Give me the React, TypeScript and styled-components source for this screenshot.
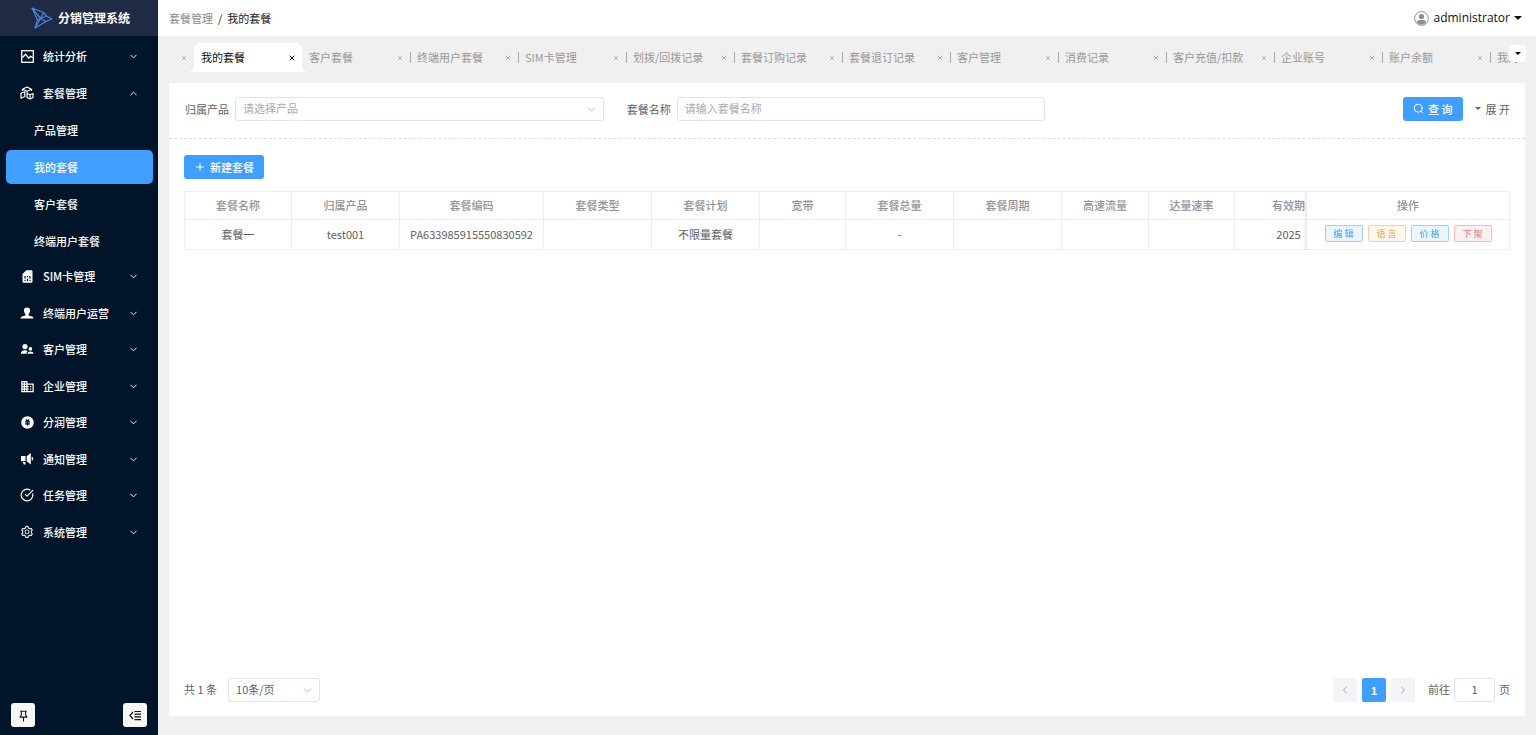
import React from "react";
import styled, { createGlobalStyle, css } from "styled-components";
import { CircleCheckBig, ChevronDown, ChevronUp, ChevronLeft, ChevronRight, Plus, X } from "lucide-react";
import { MdSimCard, MdBusiness } from "react-icons/md";
import { RiMoneyCnyCircleFill, RiPushpin2Line } from "react-icons/ri";
import { AiOutlineSetting } from "react-icons/ai";

const Global = createGlobalStyle`
  *, *::before, *::after { box-sizing: border-box; }
  body {
    margin: 0;
    font-family: "Noto Sans CJK SC", "Noto Sans", sans-serif;
    font-size: 11px;
    line-height: 16px;
    color: #606266;
    background: #f0f0f0;
  }
  button, input, select { font: inherit; color: inherit; margin: 0; }
  button { cursor: pointer; padding: 0; border: 0; background: none; }
  a { color: inherit; text-decoration: none; }
  ul { list-style: none; margin: 0; padding: 0; }
  svg { display: block; flex: none; }
`;

const Page = styled.div`
  display: flex;
  min-height: 100vh;
`;

const Sidebar = styled.aside`
  width: 158px;
  flex: none;
  display: flex;
  flex-direction: column;
  background: #001529;
  color: #fff;
`;

const Brand = styled.a`
  display: flex;
  align-items: center;
  height: 36px;
  padding-left: 31px;
  gap: 5px;
  background: #1f2a44;
  font-size: 12px;
  font-weight: 700;
  white-space: nowrap;
`;

const Menu = styled.ul`
  flex: 1;
  padding: 2px 5px 0 6px;
`;

const MenuGroup = styled.li`
  &:nth-child(even) {
    padding-top: 1px;
  }
`;

const MenuButton = styled.button`
  display: flex;
  align-items: center;
  width: 100%;
  height: 36px;
  padding: 0 14px 0 13px;
  gap: 8px;
  color: #fff;
  font-weight: 500;
  text-align: left;
`;

const MenuLabel = styled.span`
  flex: 1;
  white-space: nowrap;
`;

const SubMenu = styled.ul`
  display: flex;
  flex-direction: column;
  gap: 3px;
  padding-top: 2px;
`;

const SubLink = styled.a<{ $active?: boolean }>`
  display: flex;
  align-items: center;
  height: 34px;
  padding-left: 28px;
  border-radius: 5px;
  font-weight: 500;
  background: ${(p) => (p.$active ? "#409eff" : "transparent")};
`;

const SidebarFooter = styled.div`
  display: flex;
  justify-content: space-between;
  padding: 8px 11px;
`;

const SquareButton = styled.button`
  display: grid;
  place-items: center;
  width: 24px;
  height: 24px;
  border-radius: 3px;
  background: #f7f7f7;
  color: #111;
`;

const Main = styled.main`
  flex: 1;
  min-width: 0;
  display: flex;
  flex-direction: column;
`;

const TopBar = styled.header`
  display: flex;
  align-items: center;
  justify-content: space-between;
  height: 36px;
  padding: 0 14px 0 11px;
  background: #fff;
`;

const Crumbs = styled.nav`
  display: flex;
  gap: 5px;
  color: #222;
  a { color: #8c8c8c; }
`;

const UserButton = styled.button`
  display: flex;
  align-items: center;
  gap: 4px;
  font-family: "Open Sans", "Noto Sans", sans-serif;
  font-size: 12px;
  color: #111;
`;

const TabBar = styled.div`
  position: relative;
  padding-left: 11px;
`;

const TabStrip = styled.div`
  display: flex;
  height: 47px;
  padding-top: 7px;
  overflow: hidden;
`;

const Tab = styled.div<{ $active?: boolean; $divider?: boolean; $tail?: boolean }>`
  position: relative;
  display: flex;
  align-items: center;
  justify-content: ${(p) => (p.$tail ? "flex-end" : "space-between")};
  flex: none;
  width: ${(p) => (p.$tail ? 25 : 108)}px;
  height: 29px;
  padding: 0 6px 0 7px;
  color: #999;
  ${(p) =>
    p.$divider &&
    css`
      &::before {
        content: "";
        position: absolute;
        left: 0;
        top: 9px;
        width: 1px;
        height: 11px;
        background: #aaa;
      }
    `}
  ${(p) =>
    p.$active &&
    css`
      background: #fff;
      color: #111;
      border-radius: 6px 6px 0 0;
      &::before,
      &::after {
        content: "";
        position: absolute;
        bottom: 0;
        width: 6px;
        height: 6px;
      }
      &::before {
        left: -6px;
        background: radial-gradient(circle at 0 0, transparent 6px, #fff 6px);
      }
      &::after {
        right: -6px;
        background: radial-gradient(circle at 100% 0, transparent 6px, #fff 6px);
      }
    `}
`;

const TabText = styled.a`
  padding-bottom: 1px;
  white-space: nowrap;
`;

const TabClose = styled.button`
  display: grid;
  place-items: center;
  width: 9px;
  height: 9px;
  color: inherit;
`;

const TabMore = styled.button`
  position: absolute;
  right: 10px;
  top: 9px;
  display: grid;
  place-items: center;
  width: 17px;
  height: 17px;
  border-radius: 3px;
  background: #fff;
  color: #000;
`;

const Card = styled.section`
  flex: 1;
  display: flex;
  flex-direction: column;
  margin: 0 11px 19px;
  background: #fff;
`;

const Filters = styled.form`
  display: grid;
  grid-template-columns: repeat(3, 1fr);
  align-items: center;
  padding: 14px 15px 17px 16px;
  border-bottom: 1px dashed #dcdfe6;
`;

const Field = styled.div`
  display: flex;
  align-items: center;
  gap: 6px;
  padding-right: 23px;
`;

const FieldLabel = styled.label`
  white-space: nowrap;
`;

const controlBox = css`
  width: 100%;
  height: 24px;
  padding: 0 7px 2px;
  border: 1px solid #e0e3ea;
  border-radius: 3px;
  background: #fff;
  outline: 0;
`;

const SelectWrap = styled.div<{ $width?: number }>`
  display: grid;
  align-items: center;
  ${(p) => (p.$width ? `width: ${p.$width}px;` : "flex: 1;")}
  & > * { grid-area: 1 / 1; }
  & > svg { justify-self: end; margin-right: 6px; color: #a8abb2; pointer-events: none; }
`;

const Select = styled.select<{ $empty?: boolean }>`
  ${controlBox}
  appearance: none;
  color: ${(p) => (p.$empty ? "#a8abb2" : "#606266")};
`;

const TextInput = styled.input`
  ${controlBox}
  flex: 1;
  min-width: 0;
  &::placeholder { color: #a8abb2; opacity: 1; }
`;

const FilterActions = styled.div`
  display: flex;
  justify-content: flex-end;
  align-items: center;
  gap: 12px;
`;

const PrimaryButton = styled.button`
  display: flex;
  align-items: center;
  gap: 4px;
  height: 24px;
  padding: 0 10px 1px;
  border-radius: 3px;
  background: #409eff;
  color: #fff;
  font-weight: 500;
  white-space: nowrap;
`;

const ExpandButton = styled.button`
  display: flex;
  align-items: center;
  gap: 5px;
  padding-bottom: 1px;
`;

const Body = styled.div`
  flex: 1;
  display: flex;
  flex-direction: column;
  padding: 16px 15px 14px;
`;

const Toolbar = styled.div`
  display: flex;
  padding-bottom: 12px;
`;

const TableScroll = styled.div`
  overflow-x: auto;
  scrollbar-width: none;
  border: 1px solid #ebeef5;
  border-width: 1px 1px 0 1px;
`;

const Table = styled.table`
  table-layout: fixed;
  width: 100%;
  min-width: 1360px;
  border-collapse: separate;
  border-spacing: 0;
  th, td {
    padding: 0 0 2px;
    text-align: center;
    white-space: nowrap;
    background: #fff;
    border: solid #ebeef5;
    border-width: 0 1px 1px 0;
  }
  th { height: 28px; font-weight: 500; color: #909399; }
  td { height: 30px; }
  th:last-child, td:last-child {
    position: sticky;
    right: 0;
    border-right: 0;
    box-shadow: -1px 0 4px rgba(0, 0, 0, 0.15);
    clip-path: inset(0 0 0 -6px);
  }
`;

const Column = styled.col<{ $width: number }>`
  width: ${(p) => p.$width}px;
`;

const RowActions = styled.div`
  display: flex;
  justify-content: center;
  gap: 5px;
`;

const tones = {
  blue: ["#ecf5ff", "#a0cfff", "#409eff"],
  amber: ["#fdf6ec", "#f3d19e", "#e6a23c"],
  red: ["#fef0f0", "#fab6b6", "#f56c6c"],
};

const MiniButton = styled.button<{ $tone: keyof typeof tones }>`
  width: 38px;
  height: 17px;
  border: 1px solid ${(p) => tones[p.$tone][1]};
  border-radius: 2px;
  background: ${(p) => tones[p.$tone][0]};
  color: ${(p) => tones[p.$tone][2]};
  font-size: 9px;
  line-height: 14px;
`;

const Footer = styled.footer`
  display: flex;
  align-items: center;
  justify-content: space-between;
  margin-top: auto;
`;

const FooterSide = styled.div<{ $gap: number }>`
  display: flex;
  align-items: center;
  gap: ${(p) => p.$gap}px;
`;

const FooterText = styled.span`
  padding-bottom: 2px;
`;

const Pager = styled.nav`
  display: flex;
  gap: 5px;
  margin-right: 9px;
`;

const PageButton = styled.button<{ $current?: boolean }>`
  display: grid;
  place-items: center;
  width: 24px;
  height: 24px;
  border-radius: 2px;
  font-weight: 700;
  background: ${(p) => (p.$current ? "#409eff" : "#f4f4f8")};
  color: ${(p) => (p.$current ? "#fff" : "#a8abb2")};
`;

const PageInput = styled.input`
  ${controlBox}
  width: 41px;
  text-align: center;
`;

const Caret = ({ size = 8 }: { size?: number }) => (
  <svg width={size} height={size / 2} viewBox="0 0 8 4" fill="currentColor" aria-hidden="true">
    <path d="M0 0h8L4 4z" />
  </svg>
);

const BirdLogo = () => (
  <svg width="22" height="22" viewBox="0 0 22 22" fill="none" stroke="#4a86e0" strokeWidth="1.2" strokeLinejoin="round" aria-hidden="true">
    <path d="M1 1L12.500 5.500 15.500 9 21 12 15 14.500 4 21 6.500 13z" />
    <path d="M1 1L9.500 11.500 15.500 9M6.500 13L9.500 11.500 15 14.500M12.500 5.500L9.500 11.500 4 21" />
  </svg>
);

const ChartIcon = () => (
  <svg width="13" height="13" viewBox="0 0 13 13" fill="none" stroke="currentColor" strokeWidth="1.3" aria-hidden="true">
    <rect x="0.7" y="0.7" width="11.6" height="11.6" />
    <path d="M1.500 7.500L4.600 4.300 7.800 8.200 9.600 6.300 11.800 7.800" />
  </svg>
);

const CubesIcon = () => (
  <svg width="14" height="14" viewBox="0 0 14 14" fill="none" stroke="currentColor" strokeWidth="1.2" strokeLinejoin="round" aria-hidden="true">
    <path d="M2.500 3.200L7 1l4.500 2.200L7 5.200z" />
    <path d="M2.500 3.200V5M11.500 3.200V5M7 5.200V7" />
    <path d="M1 7.200l3.800-1.400v4.700L1 12.200z" />
    <path d="M7 7.500l3 1.300 3-1.300v3.900l-3 1.700-3-1.700zM10 8.800v4" />
  </svg>
);

const PersonIcon = () => (
  <svg width="14" height="14" viewBox="0 0 14 14" fill="currentColor" aria-hidden="true">
    <path d="M7 1.500c2 0 3.100 1.300 3.100 3 0 1.500-.6 2.700-1.500 3.400v1c0 .4.3.6.7.8l2.700.9c.9.300 1.400 1 1.400 1.900H.6c0-.9.5-1.600 1.400-1.900l2.700-.9c.4-.2.7-.4.7-.8v-1C4.500 7.200 3.900 6 3.900 4.500c0-1.700 1.100-3 3.100-3z" />
  </svg>
);

const CustomersIcon = () => (
  <svg width="14" height="14" viewBox="0 0 14 14" fill="currentColor" aria-hidden="true">
    <circle cx="5" cy="4.600" r="2.600" />
    <circle cx="10.400" cy="6.900" r="1.800" />
    <path d="M.8 11.800c0-2.300 1.700-3.600 4.200-3.600 1.200 0 2.100.3 2.800.8-.8.6-1.300 1.500-1.300 2.800zM7.600 11.800c.1-1.500 1.200-2.200 2.900-2.200s2.900.8 2.900 2.200z" />
  </svg>
);

const HornIcon = () => (
  <svg width="14" height="14" viewBox="0 0 14 14" fill="currentColor" aria-hidden="true">
    <path d="M1 4h4.500v5.300H1zM2.800 10h2.700v2.600H3.800zM6.700 4.200L10.800 1v11.400L6.700 9.200zM11.700 4.700c1 .3 1.500 1 1.500 2s-.5 1.700-1.500 2z" />
  </svg>
);

const SearchIcon = () => (
  <svg width="11" height="11" viewBox="0 0 11 11" fill="none" stroke="currentColor" strokeWidth="1" strokeLinecap="round" aria-hidden="true">
    <circle cx="5.200" cy="5.200" r="4" />
    <path d="M8.200 8.200L9.800 9.800" />
  </svg>
);

const CollapseIcon = () => (
  <svg width="13" height="11" viewBox="0 0 13 11" fill="none" stroke="currentColor" strokeWidth="1.2" aria-hidden="true">
    <path d="M4 2L1 5.500 4 9M5.500 1.500H12M5.500 4.200H12M5.500 6.900H12M5.500 9.600H12" />
  </svg>
);

const AvatarIcon = () => (
  <svg width="15" height="15" viewBox="0 0 15 15" aria-hidden="true">
    <circle cx="7.500" cy="7.500" r="6.900" fill="#fff" stroke="#8a909c" strokeWidth="1" />
    <circle cx="7.500" cy="5.600" r="2.700" fill="#8a909c" />
    <path d="M2.600 11.200c1-2 3-2.200 4.900-2.200s3.900.2 4.900 2.200c-1.200 1.600-3 2.300-4.900 2.300s-3.700-.7-4.900-2.300z" fill="#8a909c" />
  </svg>
);

const menu = [
  { label: "统计分析", icon: <ChartIcon /> },
  { label: "套餐管理", icon: <CubesIcon />, children: ["产品管理", "我的套餐", "客户套餐", "终端用户套餐"] },
  { label: "SIM卡管理", icon: <MdSimCard size={15} /> },
  { label: "终端用户运营", icon: <PersonIcon /> },
  { label: "客户管理", icon: <CustomersIcon /> },
  { label: "企业管理", icon: <MdBusiness size={15} /> },
  { label: "分润管理", icon: <RiMoneyCnyCircleFill size={15} /> },
  { label: "通知管理", icon: <HornIcon /> },
  { label: "任务管理", icon: <CircleCheckBig size={14} /> },
  { label: "系统管理", icon: <AiOutlineSetting size={14} /> },
];

const MenuIcon = styled.span`
  display: grid;
  place-items: center;
  width: 16px;
  height: 16px;
`;

const tabs = ["我的套餐", "客户套餐", "终端用户套餐", "SIM卡管理", "划拨/回拨记录", "套餐订购记录", "套餐退订记录", "客户管理", "消费记录", "客户充值/扣款", "企业账号", "账户余额", "我的"];

const columns: [string, number, string][] = [
  ["套餐名称", 107, "套餐一"],
  ["归属产品", 108, "test001"],
  ["套餐编码", 144, "PA633985915550830592"],
  ["套餐类型", 108, ""],
  ["套餐计划", 108, "不限量套餐"],
  ["宽带", 86, ""],
  ["套餐总量", 108, "-"],
  ["套餐周期", 108, ""],
  ["高速流量", 87, ""],
  ["达量速率", 86, ""],
  ["有效期", 108, "2025"],
];

export default function App() {
  return (
    <Page>
      <Global />
      <Sidebar>
        <Brand href="#">
          <BirdLogo />
          分销管理系统
        </Brand>
        <Menu>
          {menu.map((item) => (
            <MenuGroup key={item.label}>
              <MenuButton type="button" aria-expanded={!!item.children}>
                <MenuIcon>{item.icon}</MenuIcon>
                <MenuLabel>{item.label}</MenuLabel>
                {item.children ? <ChevronUp size={11} /> : <ChevronDown size={11} />}
              </MenuButton>
              {item.children && (
                <SubMenu>
                  {item.children.map((child) => (
                    <li key={child}>
                      <SubLink href="#" $active={child === "我的套餐"}>
                        {child}
                      </SubLink>
                    </li>
                  ))}
                </SubMenu>
              )}
            </MenuGroup>
          ))}
        </Menu>
        <SidebarFooter>
          <SquareButton type="button" aria-label="固定">
            <RiPushpin2Line size={13} />
          </SquareButton>
          <SquareButton type="button" aria-label="收起">
            <CollapseIcon />
          </SquareButton>
        </SidebarFooter>
      </Sidebar>

      <Main>
        <TopBar>
          <Crumbs>
            <a href="#">套餐管理</a>
            <span>/</span>
            <span>我的套餐</span>
          </Crumbs>
          <UserButton type="button">
            <AvatarIcon />
            administrator
            <Caret />
          </UserButton>
        </TopBar>

        <TabBar>
          <TabStrip>
            <Tab $tail>
              <TabClose type="button" aria-label="关闭">
                <X size={8} />
              </TabClose>
            </Tab>
            {tabs.map((name, i) => (
              <Tab key={name} $active={i === 0} $divider={i > 1}>
                <TabText href="#">{name}</TabText>
                <TabClose type="button" aria-label="关闭">
                  <X size={8} strokeWidth={i === 0 ? 3 : 2} />
                </TabClose>
              </Tab>
            ))}
          </TabStrip>
          <TabMore type="button" aria-label="更多">
            <Caret size={6} />
          </TabMore>
        </TabBar>

        <Card>
          <Filters>
            <Field>
              <FieldLabel htmlFor="product">归属产品</FieldLabel>
              <SelectWrap>
                <Select id="product" $empty defaultValue="">
                  <option value="">请选择产品</option>
                </Select>
                <ChevronDown size={13} strokeWidth={1.5} />
              </SelectWrap>
            </Field>
            <Field>
              <FieldLabel htmlFor="name">套餐名称</FieldLabel>
              <TextInput id="name" placeholder="请输入套餐名称" />
            </Field>
            <FilterActions>
              <PrimaryButton type="button">
                <SearchIcon />
                查 询
              </PrimaryButton>
              <ExpandButton type="button">
                <Caret size={6} />
                展 开
              </ExpandButton>
            </FilterActions>
          </Filters>

          <Body>
            <Toolbar>
              <PrimaryButton type="button">
                <Plus size={12} />
                新建套餐
              </PrimaryButton>
            </Toolbar>
            <TableScroll>
              <Table>
                <colgroup>
                  {columns.map(([name, width]) => (
                    <Column key={name} $width={width} />
                  ))}
                  <Column $width={202} />
                </colgroup>
                <thead>
                  <tr>
                    {columns.map(([name]) => (
                      <th key={name}>{name}</th>
                    ))}
                    <th>操作</th>
                  </tr>
                </thead>
                <tbody>
                  <tr>
                    {columns.map(([name, , value]) => (
                      <td key={name}>{value}</td>
                    ))}
                    <td>
                      <RowActions>
                        <MiniButton type="button" $tone="blue">编 辑</MiniButton>
                        <MiniButton type="button" $tone="amber">语 言</MiniButton>
                        <MiniButton type="button" $tone="blue">价 格</MiniButton>
                        <MiniButton type="button" $tone="red">下 架</MiniButton>
                      </RowActions>
                    </td>
                  </tr>
                </tbody>
              </Table>
            </TableScroll>
            <Footer>
              <FooterSide $gap={11}>
                <FooterText>共 1 条</FooterText>
                <SelectWrap $width={92}>
                  <Select aria-label="每页条数" defaultValue="10">
                    <option value="10">10条/页</option>
                  </Select>
                  <ChevronDown size={13} strokeWidth={1.5} />
                </SelectWrap>
              </FooterSide>
              <FooterSide $gap={4}>
                <Pager aria-label="分页">
                  <PageButton type="button" aria-label="上一页">
                    <ChevronLeft size={12} />
                  </PageButton>
                  <PageButton type="button" $current>1</PageButton>
                  <PageButton type="button" aria-label="下一页">
                    <ChevronRight size={12} />
                  </PageButton>
                </Pager>
                <FooterText as="label" htmlFor="jump">前往</FooterText>
                <PageInput id="jump" defaultValue="1" />
                <FooterText>页</FooterText>
              </FooterSide>
            </Footer>
          </Body>
        </Card>
      </Main>
    </Page>
  );
}
